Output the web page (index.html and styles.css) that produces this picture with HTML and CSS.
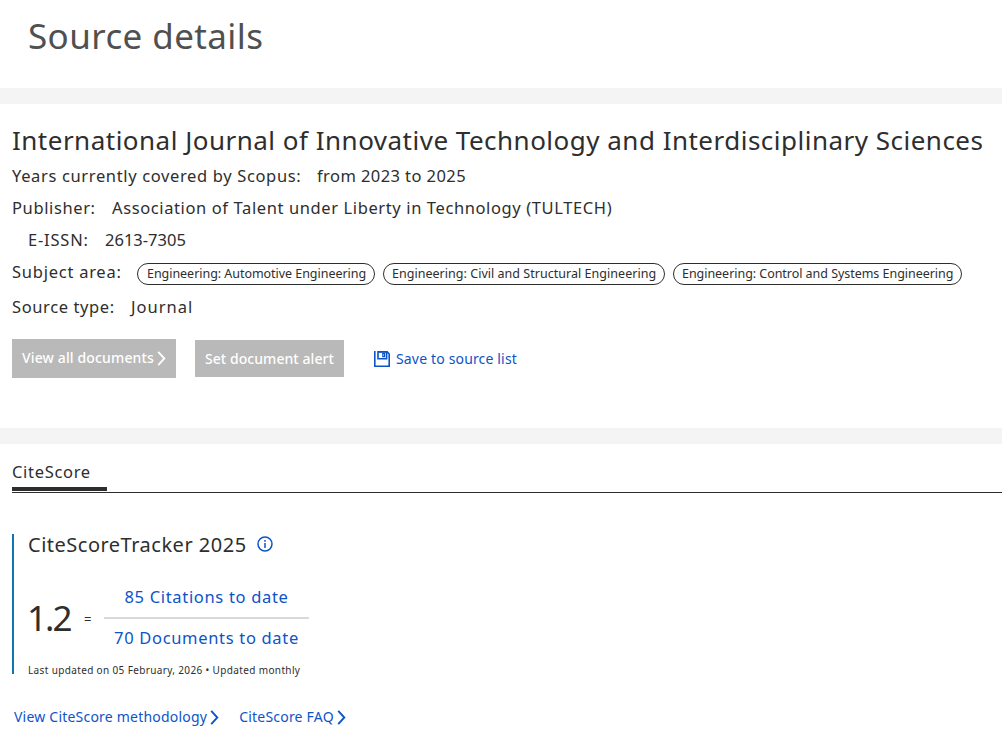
FILE: index.html
```html
<!DOCTYPE html>
<html lang="en">
<head>
<meta charset="utf-8">
<title>Source details</title>
<link rel="stylesheet" href="styles.css">
</head>
<body>
<header class="page-header"><h1 class="page-title">Source details</h1></header>
<main>
  <section class="source">
    <h2 class="source-title">International Journal of Innovative Technology and Interdisciplinary Sciences</h2>
    <div class="row"><span class="label years-label">Years currently covered by Scopus:</span><span class="years">from 2023 to 2025</span></div>
    <div class="row"><span class="label publisher-label">Publisher:</span><span class="publisher">Association of Talent under Liberty in Technology (TULTECH)</span></div>
    <div class="row row-indent"><span class="label issn-label">E-ISSN:</span><span class="issn">2613-7305</span></div>
    <div class="row"><span class="label subject-label">Subject area:</span>
      <div class="chips">
        <span class="chip chip-auto">Engineering: Automotive Engineering</span>
        <span class="chip chip-civil">Engineering: Civil and Structural Engineering</span>
        <span class="chip chip-control">Engineering: Control and Systems Engineering</span>
      </div>
    </div>
    <div class="row row-type"><span class="label type-label">Source type:</span><span class="type">Journal</span></div>
    <div class="actions">
      <button class="button button-view"><span class="view-text">View all documents</span><svg class="chevron" viewBox="0 0 9 16"><path d="M1 1l6.5 7L1 15"/></svg></button>
      <button class="button button-alert"><span>Set document alert</span></button>
      <a class="save"><svg class="save-icon" viewBox="0 0 16 16"><path d="M.8 0v15.2h14.4V3L13.2.8H4v7h8.6V.8"/><path d="M4 1.2h9M8.8 2.6h1.8v3H8.8z" stroke-width="1.2"/></svg><span>Save to source list</span></a>
    </div>
  </section>
  <section class="metrics">
    <nav class="tabs"><a class="tab">CiteScore</a></nav>
    <div class="tracker">
      <h3 class="tracker-title"><span>CiteScoreTracker 2025</span><svg class="info" viewBox="0 0 16 16"><circle cx="8" cy="8" r="7"/><path d="M8 7v5M8 4v1.7"/></svg></h3>
      <div class="formula">
        <span class="score">1.2</span><span class="equals">=</span>
        <div class="fraction"><a class="numerator">85 Citations to date</a><a class="denominator">70 Documents to date</a></div>
      </div>
      <p class="updated">Last updated on 05 February, 2026 • Updated monthly</p>
    </div>
    <div class="links">
      <a class="link link-method"><span>View CiteScore methodology</span><svg class="chevron" viewBox="0 0 9 16"><path d="M1 1l6.5 7L1 15"/></svg></a>
      <a class="link link-faq"><span>CiteScore FAQ</span><svg class="chevron" viewBox="0 0 9 16"><path d="M1 1l6.5 7L1 15"/></svg></a>
    </div>
  </section>
</main>
</body>
</html>
```
FILE: styles.css
```css
* { box-sizing: border-box; }
body { margin: 0; height: 750px; overflow: hidden; background: #fff; color: #2e2e2e; font: 16.5px/32px "Noto Sans", "Open Sans", sans-serif; letter-spacing: .61px; white-space: nowrap; }
h1, h2, h3, p { margin: 0; font-weight: 400; }
svg { display: block; flex: none; fill: none; stroke: currentColor; }
.page-header { height: 104px; padding: 12px 28px 0; border-bottom: 16px solid #f4f4f4; }
.page-title { font-size: 35px; line-height: 48px; color: #505050; letter-spacing: .4px; }
.source { height: 340px; padding: 20px 12px 0; border-bottom: 16px solid #f4f4f4; }
.source-title { font-size: 26px; line-height: 32px; margin-bottom: 4px; letter-spacing: .49px; }
.row { display: flex; height: 32px; }
.label { flex: none; }
.years-label { width: 305px; letter-spacing: .64px; }
.years { letter-spacing: .42px; }
.publisher-label { width: 100px; }
.row-indent { padding-left: 16px; }
.issn-label { width: 77px; letter-spacing: .8px; }
.issn { letter-spacing: 0; }
.subject-label { width: 125px; letter-spacing: .75px; }
.row-type { margin-top: 3px; }
.type-label { width: 119px; }
.type { letter-spacing: 1px; }
.chips { display: flex; gap: 8px; padding-top: 7px; }
.chip { height: 22px; border: 1px solid #2e2e2e; border-radius: 11px; padding-left: 9px; font-size: 12.5px; line-height: 19px; letter-spacing: -.04px; }
.chip-auto { width: 238px; }
.chip-civil { width: 282px; padding-left: 8px; letter-spacing: .03px; }
.chip-control { width: 289px; padding-left: 8px; }
.actions { display: flex; align-items: center; height: 39px; margin-top: 16px; font-size: 14px; letter-spacing: .16px; }
.button { display: flex; align-items: center; border: 0; padding: 0 10px; background: #b9b9b9; color: #fff; font: 500 14px/20px "Noto Sans", sans-serif; letter-spacing: .06px; }
.button-view { width: 164px; height: 39px; justify-content: space-between; letter-spacing: .14px; }
.view-text { padding-bottom: 2px; }
.button-alert { width: 149px; height: 37px; margin-left: 19px; }
.chevron { width: 9px; height: 15px; stroke-width: 2; }
.save { display: flex; align-items: center; gap: 6px; margin-left: 30px; color: #0c54c8; }
.save-icon { width: 16px; height: 16px; stroke-width: 1.6; }
.tabs { margin-left: 12px; height: 49px; border-bottom: 1px solid #2e2e2e; padding-top: 12px; display: flex; }
.tab { width: 95px; height: 35px; border-bottom: 4px solid #2e2e2e; letter-spacing: .68px; }
.tracker { margin: 41px 0 0 12px; height: 140px; width: 320px; border-left: 2px solid #0f78b0; padding-left: 14px; }
.tracker-title { display: flex; align-items: center; gap: 10px; height: 20px; font-size: 20px; line-height: 20px; letter-spacing: .5px; }
.tracker-title span { padding-top: 2px; }
.info { width: 16px; height: 16px; stroke: #0c54c8; stroke-width: 1.5; }
.formula { display: flex; align-items: center; height: 82px; margin-top: 23px; }
.score { width: 56px; font-size: 35px; line-height: 48px; letter-spacing: -2px; text-indent: -1px; }
.equals { width: 20px; font-size: 13px; padding-top: 2px; }
.fraction { width: 205px; margin-bottom: 2px; text-align: center; color: #0c54c8; letter-spacing: .68px; }
.numerator, .denominator { display: block; }
.numerator { height: 38px; border-bottom: 2px solid #d9d9d9; }
.denominator { height: 35px; padding-top: 3px; }
.updated { font-size: 10px; line-height: 14px; margin-top: 4px; letter-spacing: .36px; }
.links { display: flex; gap: 20px; margin: 33px 0 0 14px; color: #0c54c8; font-size: 14px; line-height: 20px; letter-spacing: .21px; }
.link { display: flex; align-items: center; gap: 3px; }
```
